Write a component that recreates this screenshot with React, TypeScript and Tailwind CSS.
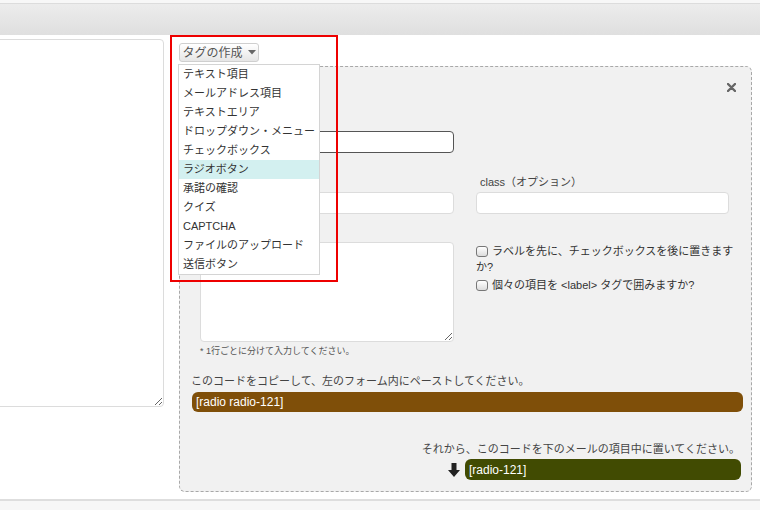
const items = [
  'テキスト項目',
  'メールアドレス項目',
  'テキストエリア',
  'ドロップダウン・メニュー',
  'チェックボックス',
  'ラジオボタン',
  '承諾の確認',
  'クイズ',
  'CAPTCHA',
  'ファイルのアップロード',
  '送信ボタン',
];

const Checkbox = () => (
  <span className="inline-block align-[-2px] w-[12px] h-[11px] mr-[4px] rounded-[3px] border border-[#777] bg-gradient-to-b from-white to-[#dcdcdc]" />
);

const App = () => {
  return (
    <div
      className="relative w-[760px] h-[510px] overflow-hidden bg-white flex flex-col text-[#333]"
      style={{ fontFamily: '"Liberation Sans", "Noto Sans CJK JP", sans-serif' }}
    >
      {/* top bar */}
      <div className="h-[4px] bg-[#f7f7f7] border-b border-[#dcdcdc] shrink-0" />
      <div className="h-[31px] bg-gradient-to-b from-[#ececec] to-[#dfdfdf] shrink-0" />

      <div className="flex h-[464px] shrink-0">
        {/* left text area */}
        <textarea
          readOnly
          className="ml-[-8px] mt-[4px] w-[172px] h-[368px] rounded-[4px] border border-[#dcdcdc] bg-white outline-none"
        />

        {/* right column */}
        <div className="ml-[15px] w-[573px] flex flex-col">
          <div className="mt-[8px] h-[19px] w-[80px] flex items-center justify-center gap-[5px] rounded-[3px] border border-[#cfcfcf] bg-gradient-to-b from-white to-[#e6e6e6] text-[12px] text-[#555]">
            <span>タグの作成</span>
            <svg width="8" height="5" viewBox="0 0 8 5">
              <path d="M0 0h8L4 4.5z" fill="#666" />
            </svg>
          </div>

          <div className="mt-[4px] h-[426px] rounded-[6px] border border-dashed border-[#a8a8a8] bg-[#f1f1f1] flex flex-col">
            <div className="flex justify-end items-center pr-[15px] pt-[13px] h-[27px]">
              <svg width="9" height="9" viewBox="0 0 9 9">
                <path d="M1 1l7 7M8 1L1 8" stroke="#666" strokeWidth="2.4" strokeLinecap="round" />
              </svg>
            </div>

            <div className="pl-[20px]">
              <div className="mt-[21px] h-[14px]" />
              <div className="mt-[2px] w-[254px] h-[22px] rounded-[4px] border border-[#555] bg-white" />

              <div className="mt-[22px] grid grid-cols-[254px_264px] gap-x-[22px]">
                <div>
                  <div className="h-[14px] mb-[3px]" />
                  <div className="h-[22px] rounded-[4px] border border-[#dcdcdc] bg-white" />
                </div>
                <div>
                  <div className="h-[14px] mb-[3px] pl-[4px] text-[11px] leading-[14px] text-[#444]">class（オプション）</div>
                  <div className="w-[253px] h-[22px] rounded-[4px] border border-[#dcdcdc] bg-white" />
                </div>

                <div className="mt-[10px]">
                  <div className="h-[14px] mb-[4px]" />
                  <textarea
                    readOnly
                    className="block w-[254px] h-[100px] rounded-[4px] border border-[#dcdcdc] bg-white outline-none"
                  />
                  <div className="mt-[3px] text-[9px] leading-[12px] text-[#555]">* 1行ごとに分けて入力してください。</div>
                </div>
                <div className="mt-[10px] pt-[19px] flex flex-col gap-[2px] text-[11px] leading-[16px] text-[#333]">
                  <p>
                    <Checkbox />
                    ラベルを先に、チェックボックスを後に置きますか?
                  </p>
                  <p>
                    <Checkbox />
                    個々の項目を &lt;label&gt; タグで囲みますか?
                  </p>
                </div>
              </div>
            </div>

            <div className="pl-[11px] pr-[8px] mt-[17px]">
              <div className="text-[11px] leading-[14px] text-[#444]">このコードをコピーして、左のフォーム内にペーストしてください。</div>
              <div className="mt-[4px] ml-[1px] h-[20px] rounded-[6px] bg-[#7f4f09] px-[4px] flex items-center text-[12px] text-white">
                [radio radio-121]
              </div>
            </div>

            <div className="mt-[30px] pr-[10px] flex flex-col items-end">
              <div className="pr-[1px] text-[11px] leading-[14px] text-[#444]">それから、このコードを下のメールの項目中に置いてください。</div>
              <div className="mt-[3px] flex items-center gap-[5px]">
                <svg width="12" height="14" viewBox="0 0 12 14">
                  <path d="M3.5 0h5v7H12L6 14 0 7h3.5z" fill="#222" />
                </svg>
                <div className="w-[276px] h-[21px] rounded-[6px] bg-[#414b02] px-[4px] flex items-center text-[12px] text-white">
                  [radio-121]
                </div>
              </div>
            </div>
          </div>
        </div>
      </div>

      <div className="flex-1 border-t-2 border-[#dedede] bg-[#f7f7f7]" />

      {/* dropdown menu */}
      <div className="absolute left-[178px] top-[64px] w-[142px] border border-[#d4d4d4] bg-white">
        {items.map((item) => (
          <div
            key={item}
            className={
              item === 'ラジオボタン'
                ? 'h-[19px] pl-[4px] flex items-center text-[11px] text-[#333] bg-[#d3f0f0]'
                : 'h-[19px] pl-[4px] flex items-center text-[11px] text-[#333]'
            }
          >
            {item}
          </div>
        ))}
      </div>

      {/* highlight frame */}
      <div className="absolute left-[170px] top-[35px] w-[168px] h-[247px] border-2 border-[#ee0000]" />
    </div>
  );
};

export default App;
